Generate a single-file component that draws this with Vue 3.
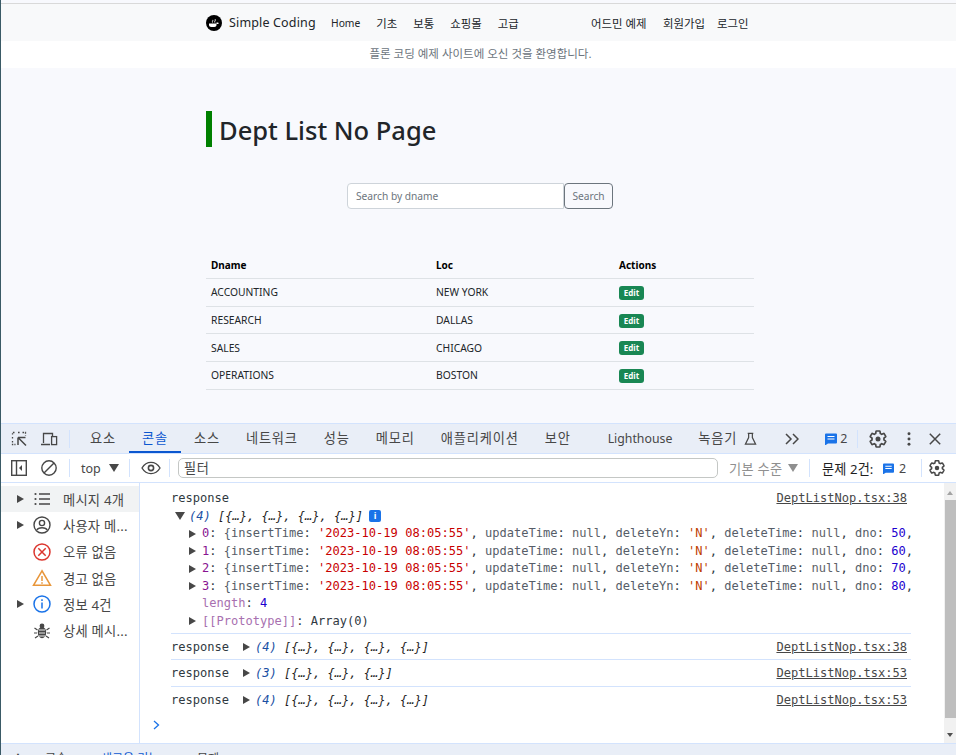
<script setup>
const navMain = ['Home', '기초', '보통', '쇼핑몰', '고급']
const depts = [
  { d: 'ACCOUNTING', l: 'NEW YORK' },
  { d: 'RESEARCH', l: 'DALLAS' },
  { d: 'SALES', l: 'CHICAGO' },
  { d: 'OPERATIONS', l: 'BOSTON' }
]
const tabs = ['요소', '콘솔', '소스', '네트워크', '성능', '메모리', '애플리케이션', '보안']
const rows = [50, 60, 70, 80]
const later = [
  { n: 4, t: '[{…}, {…}, {…}, {…}]', src: 'DeptListNop.tsx:38' },
  { n: 3, t: '[{…}, {…}, {…}]', src: 'DeptListNop.tsx:53' },
  { n: 4, t: '[{…}, {…}, {…}, {…}]', src: 'DeptListNop.tsx:53' }
]
const gear = 'M19.14 12.94c.04-.3.06-.61.06-.94 0-.32-.02-.64-.07-.94l2.03-1.58a.49.49 0 0 0 .12-.61l-1.92-3.32a.488.488 0 0 0-.59-.22l-2.39.96c-.5-.38-1.03-.7-1.62-.94l-.36-2.54a.484.484 0 0 0-.48-.41h-3.84c-.24 0-.43.17-.47.41l-.36 2.54c-.59.24-1.13.57-1.62.94l-2.39-.96c-.22-.08-.47 0-.59.22L2.74 8.87c-.12.21-.08.47.12.61l2.03 1.58c-.05.3-.09.63-.09.94s.02.64.07.94l-2.03 1.58a.49.49 0 0 0-.12.61l1.92 3.32c.12.22.37.29.59.22l2.39-.96c.5.38 1.03.7 1.62.94l.36 2.54c.05.24.24.41.48.41h3.84c.24 0 .44-.17.47-.41l.36-2.54c.59-.24 1.13-.56 1.62-.94l2.39.96c.22.08.47 0 .59-.22l1.92-3.32c.12-.22.07-.47-.12-.61l-2.01-1.58z'
</script>

<template>
  <div class="root">
    <section class="page">
      <nav class="nav">
        <svg class="logo" viewBox="0 0 16 16">
          <circle cx="8" cy="8" r="8" fill="#000" />
          <path d="M3 8.500h7.500v1.600c0 1.200-1 2-2.200 2H5.200C4 12.100 3 11.300 3 10.100z" fill="#fff" />
          <path d="M10.500 9h1.600c.7 0 .7-1.400-.2-1.400h-1.400z" fill="#fff" />
          <path d="M6.500 7.500c-.6-1 .7-1.400.2-2.600M8.800 7.500c-.6-1.200 1-1.800.4-3.300" stroke="#fff" stroke-width=".9" fill="none" />
        </svg>
        <span class="brand">Simple Coding</span>
        <div class="nav-main"><span v-for="n in navMain" :key="n" :class="{ home: n === 'Home' }">{{ n }}</span></div>
        <div class="nav-right">
          <span class="r1">어드민 예제</span><span class="r2">회원가입</span><span>로그인</span>
        </div>
      </nav>
      <div class="welcome">플론 코딩 예제 사이트에 오신 것을 환영합니다.</div>
      <main class="content">
        <h1 class="title">Dept List No Page</h1>
        <div class="search">
          <div class="search-input">Search by dname</div>
          <div class="search-btn">Search</div>
        </div>
        <table class="table">
          <thead>
            <tr><th class="c1">Dname</th><th class="c2">Loc</th><th>Actions</th></tr>
          </thead>
          <tbody>
            <tr v-for="r in depts" :key="r.d">
              <td>{{ r.d }}</td>
              <td>{{ r.l }}</td>
              <td><span class="badge">Edit</span></td>
            </tr>
          </tbody>
        </table>
      </main>
    </section>

    <section class="devtools">
      <div class="tabbar">
        <svg class="ic first" viewBox="0 0 16 16" width="16" height="16" fill="none" stroke="#474747">
          <path d="M3.500 1.500h-2v2M1.500 6v1.500M1.500 10v3.500h3M7 1.500h2M11.500 1.500h3v3" stroke-width="1.300" stroke-dasharray="1.600 1.100" />
          <path d="M7 6.500h7.500M7 6.500V14M7.500 7l7.500 7.500" stroke-width="1.500" />
        </svg>
        <svg class="ic device" viewBox="0 0 18 16" width="18" height="16" fill="none" stroke="#474747" stroke-width="1.300">
          <path d="M3.500 12V2.500h9V5M1 13.500h9" />
          <rect x="11.600" y="5.600" width="5" height="8" />
        </svg>
        <i class="vsep s1"></i>
        <div class="tabs">
          <span v-for="t in tabs" :key="t" class="tab" :class="{ active: t === '콘솔' }">{{ t }}</span>
        </div>
        <span class="tab lh">Lighthouse</span>
        <span class="tab rec">녹음기</span>
        <svg class="flask" viewBox="0 0 14 14" width="13" height="14" fill="none" stroke="#474747" stroke-width="1.300"><path d="M4 1h6M5 1v4.500L1.500 12.500h11L9 5.500V1" /></svg>
        <svg class="more" viewBox="0 0 14 12" width="14" height="12" fill="none" stroke="#474747" stroke-width="1.500"><path d="M1 1l5 5-5 5M8 1l5 5-5 5" /></svg>
        <svg class="chat" viewBox="0 0 12 12" width="12" height="12"><path d="M0 1.500Q0 .5 1 .5h10q1 0 1 1v8q0 1-1 1H3L0 12.500z" fill="#1a73e8" /><path d="M2.500 3.500h7M2.500 6h7" stroke="#fff" stroke-width="1.100" /></svg>
        <span class="cnt">2</span>
        <i class="vsep s2"></i>
        <svg class="gear g1" viewBox="0 0 24 24" width="20" height="20"><path :d="gear" fill="none" stroke="#474747" stroke-width="2" /><circle cx="12" cy="12" r="3" fill="#474747" /></svg>
        <svg class="dots" viewBox="0 0 4 16" width="4" height="14" fill="#474747"><circle cx="2" cy="2" r="1.700" /><circle cx="2" cy="8" r="1.700" /><circle cx="2" cy="14" r="1.700" /></svg>
        <svg class="close" viewBox="0 0 12 12" width="12" height="12" stroke="#474747" stroke-width="1.500"><path d="M.8.8l10.400 10.400M11.200.8L.8 11.200" /></svg>
      </div>

      <div class="toolbar">
        <svg class="t-panel" viewBox="0 0 16 16" width="16" height="16" fill="none" stroke="#474747" stroke-width="1.400"><rect x=".7" y=".7" width="14.600" height="14.600" /><path d="M5.500 1v14" /><path d="M11 5v6L8 8z" fill="#474747" stroke="none" /></svg>
        <svg class="t-block" viewBox="0 0 16 16" width="16" height="16" fill="none" stroke="#474747" stroke-width="1.400"><circle cx="8" cy="8" r="7.200" /><path d="M3 13L13 3" /></svg>
        <i class="vsep s3"></i>
        <span class="top">top</span>
        <i class="tri-d dk t-arrow"></i>
        <i class="vsep s4"></i>
        <svg class="eye" viewBox="0 0 20 14" width="20" height="14" fill="none" stroke="#474747" stroke-width="1.400"><path d="M1 7c4.500-7.500 13.500-7.500 18 0-4.500 7.500-13.500 7.500-18 0z" /><circle cx="10" cy="7" r="2.600" stroke-width="1.600" /></svg>
        <i class="vsep s5"></i>
        <div class="filter">필터</div>
        <span class="level">기본 수준</span>
        <i class="tri-d gr l-arrow"></i>
        <i class="vsep s6"></i>
        <span class="issues">문제 2건:</span>
        <svg class="chat2" viewBox="0 0 12 12" width="11" height="11"><path d="M0 1.500Q0 .5 1 .5h10q1 0 1 1v8q0 1-1 1H3L0 12.500z" fill="#1a73e8" /><path d="M2.500 3.500h7M2.500 6h7" stroke="#fff" stroke-width="1.100" /></svg>
        <span class="cnt2">2</span>
        <i class="vsep s7"></i>
        <svg class="gear g2" viewBox="0 0 24 24" width="18" height="18"><path :d="gear" fill="none" stroke="#474747" stroke-width="2" /><circle cx="12" cy="12" r="3" fill="#474747" /></svg>
      </div>

      <div class="body">
        <aside class="side">
          <div class="srow on">
            <i class="tri-r sa"></i>
            <svg class="si" viewBox="0 0 18 18" width="18" height="18" fill="#474747"><path d="M6 3.200h11v1.600H6zM6 8.200h11v1.600H6zM6 13.200h11v1.600H6z" /><circle cx="2.500" cy="4" r="1.100" /><circle cx="2.500" cy="9" r="1.100" /><circle cx="2.500" cy="14" r="1.100" /></svg>
            <span>메시지 4개</span>
          </div>
          <div class="srow">
            <i class="tri-r sa"></i>
            <svg class="si" viewBox="0 0 18 18" width="18" height="18" fill="none" stroke="#474747" stroke-width="1.400"><circle cx="9" cy="9" r="8" /><circle cx="9" cy="7" r="2.600" /><path d="M3.800 14c1.500-3 9-3 10.400 0" /></svg>
            <span>사용자 메...</span>
          </div>
          <div class="srow">
            <svg class="si np" viewBox="0 0 18 18" width="18" height="18" fill="none" stroke="#dc362e" stroke-width="1.500"><circle cx="9" cy="9" r="8" /><path d="M5.300 5.300l7.400 7.400M12.700 5.300l-7.400 7.400" /></svg>
            <span>오류 없음</span>
          </div>
          <div class="srow">
            <svg class="si np warn" viewBox="0 0 20 18" width="20" height="18" fill="none" stroke="#e8963a" stroke-width="1.500"><path d="M10 1.800L1.500 16.300h17z" /><path d="M10 7v5M10 13.200v1.500" /></svg>
            <span>경고 없음</span>
          </div>
          <div class="srow">
            <i class="tri-r sa"></i>
            <svg class="si" viewBox="0 0 18 18" width="18" height="18" fill="none" stroke="#1a73e8" stroke-width="1.500"><circle cx="9" cy="9" r="8" /><path d="M9 7.500v6M9 4.300v1.700" /></svg>
            <span>정보 4건</span>
          </div>
          <div class="srow">
            <svg class="si np" viewBox="0 0 18 18" width="18" height="18" fill="#474747"><ellipse cx="9" cy="10.500" rx="4.200" ry="5.800" /><circle cx="9" cy="4" r="2.400" /><path d="M1.500 6l3 2M16.500 6l-3 2M1 11h3M17 11h-3M2 16l3-2M16 16l-3-2" stroke="#474747" stroke-width="1.200" /><path d="M6 8h6M6 11h6M6 14h6" stroke="#fff" stroke-width=".9" /></svg>
            <span>상세 메시...</span>
          </div>
        </aside>

        <div class="console">
          <div class="msg first-msg">
            <div class="line split"><span>response</span><a class="src">DeptListNop.tsx:38</a></div>
            <div class="line arr"><i class="tri-d dk ca"></i><em class="sum"><span class="num">(4)</span> [{…}, {…}, {…}, {…}]</em><b class="info">i</b></div>
            <div v-for="(r, i) in rows" :key="r" class="line ent">
              <i class="tri-r ea"></i><span class="k">{{ i }}</span>: <span class="g">{</span><span class="p">insertTime</span>: <span class="s">'2023-10-19 08:05:55'</span>, <span class="p">updateTime</span>: <span class="n">null</span>, <span class="p">deleteYn</span>: <span class="y">'N'</span>, <span class="p">deleteTime</span>: <span class="n">null</span>, <span class="p">dno</span>: <span class="v">{{ r }}</span>,
            </div>
            <div class="line plain"><span class="l">length</span>: <span class="v">4</span></div>
            <div class="line ent"><i class="tri-r ea"></i><span class="l">[[Prototype]]</span>: <span>Array(0)</span></div>
          </div>
          <div v-for="(m, i) in later" :key="i" class="msg later" :class="{ last: i === 2 }">
            <div class="line split">
              <span>response<i class="tri-r la"></i><em class="sum"><span class="num">({{ m.n }})</span> {{ m.t }}</em></span>
              <a class="src">{{ m.src }}</a>
            </div>
          </div>
          <svg class="prompt" viewBox="0 0 7 10" width="7" height="10" fill="none" stroke="#1a73e8" stroke-width="1.300"><path d="M1 1l4.500 4L1 9" /></svg>
          <div class="scroll">
            <i class="sb-up"></i>
            <i class="sb-thumb"></i>
            <i class="sb-down"></i>
          </div>
        </div>
      </div>

      <div class="drawer">
        <span class="d1">⋮</span><span class="d2">콘솔</span><span class="d3">새로운 기능</span><span class="d4">문제</span>
      </div>
    </section>
  </div>
</template>

<style>
html, body { margin: 0; background: #fff; }
</style>

<style scoped>
.root {
  width: 955px; height: 755px; overflow: hidden; display: flex; flex-direction: column;
  border-left: 1px solid #3a5a66;
  font-family: "Noto Sans", "Noto Sans CJK KR", sans-serif; color: #212529;
}
.page { height: 423px; background: #f8f9fd; display: flex; flex-direction: column; flex: none; }
.nav {
  margin-top: 3px; height: 37px; background: #f8f9fa; border-top: 1px solid #d9d9d9;
  display: flex; align-items: center; padding-left: 205px; font-size: 11.400px; flex: none;
}
.logo { width: 16px; height: 16px; flex: none; }
.brand { margin-left: 7px; font-size: 12.500px; letter-spacing: .15px; width: 86px; white-space: nowrap; }
.nav-main { display: flex; align-items: center; gap: 16px; margin-left: 16px; width: 260px; }
.home { font-size: 10.300px; }
.nav-right { display: flex; }
.r1 { width: 72px; white-space: nowrap; }
.r2 { width: 54px; white-space: nowrap; }
.welcome {
  height: 27px; background: #fff; text-align: center; font-size: 11.500px; line-height: 26px;
  color: #6c757d; padding-left: 4px; flex: none;
}
.content { flex: 1; padding-left: 205px; }
.title {
  margin: 43px 0 0; height: 36px; border-left: 6px solid #008000; padding-left: 7px;
  font-size: 25.500px; font-weight: 500; line-height: 38px; color: #212529; white-space: nowrap;
}
.search { display: flex; margin: 36px 0 0 141px; height: 26px; font-size: 10.200px; line-height: 24px; }
.search-input {
  width: 207px; background: #fff; border: 1px solid #ced4da; border-radius: 4px 0 0 4px;
  padding-left: 8px; color: #6c757d;
}
.search-btn {
  width: 47px; text-align: center; border: 1px solid #6c757d; border-radius: 4px; color: #6c757d;
}
.table { width: 548px; margin-top: 43px; border-collapse: collapse; table-layout: fixed; font-size: 10.300px; }
.table th, .table td { padding: 0 5px; text-align: left; border-bottom: 1px solid #dee2e6; white-space: nowrap; }
.table th { font-weight: 700; height: 26px; color: #000; font-size: 10px; }
.table td { height: 26.700px; }
.c1 { width: 215px; }
.c2 { width: 173px; }
.badge {
  display: inline-block; width: 25px; height: 14px; background: #198754; color: #fff; border-radius: 3px;
  font-size: 8px; font-weight: 700; line-height: 14px; text-align: center; vertical-align: middle;
}

.devtools { flex: 1; display: flex; flex-direction: column; min-height: 0; color: #474747; }
.tabbar {
  height: 29px; flex: none; background: #e9eef7; border-top: 1px solid #d3e3fd; border-bottom: 1px solid #d3e3fd;
  display: flex; align-items: center; font-size: 13.200px; position: relative;
}
.vsep { display: block; width: 1px; height: 18px; background: #d3e3fd; flex: none; }
.ic.first { margin-left: 10px; }
.ic.device { margin-left: 13px; }
.s1 { margin-left: 11px; }
.tabs { display: flex; height: 100%; margin-left: 7px; }
.tab { padding: 0 13px; line-height: 29px; letter-spacing: .85px; white-space: nowrap; height: 29px; box-sizing: border-box; }
.tab.active { color: #0b57d0; border-bottom: 2px solid #0b57d0; }
.lh { margin-left: 11px; letter-spacing: 0; font-size: 12.300px; }
.rec { padding-right: 0; }
.flask { margin-left: 7px; }
.more { margin-left: 28px; }
.chat { margin-left: 26px; }
.cnt { margin-left: 3px; font-size: 12.500px; width: 8px; }
.s2 { margin-left: 9px; }
.g1 { margin-left: 10px; }
.dots { margin-left: 19px; }
.close { margin-left: 18px; }

.toolbar {
  height: 28px; flex: none; background: #fff; border-bottom: 1px solid #d3e3fd;
  display: flex; align-items: center; font-size: 13.200px;
}
.t-panel { margin-left: 10px; }
.t-block { margin-left: 14px; }
.s3 { margin-left: 12px; }
.top { margin-left: 11px; width: 28px; font-size: 12.500px; }
.s4 { margin-left: 10px; }
.eye { margin-left: 11px; }
.s5 { margin-left: 8px; }
.filter {
  margin-left: 8px; width: 533px; height: 18px; border: 1px solid #c4c7c5; border-radius: 5px;
  padding-left: 5px; line-height: 18px; flex: none; letter-spacing: .5px;
}
.level { margin-left: 11px; color: #8f8f8f; width: 59px; white-space: nowrap; letter-spacing: .3px; }
.s6 { margin-left: 11px; }
.issues { margin-left: 12px; width: 61px; white-space: nowrap; color: #1f1f1f; letter-spacing: .1px; }
.cnt2 { margin-left: 5px; width: 8px; font-size: 12.500px; }
.s7 { margin-left: 14px; }
.g2 { margin-left: 6px; }

.tri-d { display: inline-block; width: 0; height: 0; border-left: 5px solid transparent; border-right: 5px solid transparent; border-top: 8px solid #474747; flex: none; }
.tri-d.gr { border-top-color: #8f8f8f; }
.tri-r { display: inline-block; width: 0; height: 0; border-top: 4.500px solid transparent; border-bottom: 4.500px solid transparent; border-left: 7px solid #474747; flex: none; }

.body { flex: 1; min-height: 0; display: flex; background: #fff; }
.side { width: 138px; flex: none; border-right: 1px solid #d3e3fd; padding-top: 3px; font-size: 13.300px; }
.srow { height: 26.300px; display: flex; align-items: center; white-space: nowrap; letter-spacing: .2px; }
.srow.on { background: #f1f3f4; }
.sa { margin-left: 16px; }
.si { margin-left: 9px; margin-right: 12px; flex: none; }
.si.np { margin-left: 32px; }
.si.warn { margin-left: 31px; margin-right: 11px; }

.console { flex: 1; position: relative; font: 12.050px "DejaVu Sans Mono", monospace; color: #303942; min-width: 0; }
.msg { margin: 0 45px 0 31px; }
.first-msg { padding: 7px 0 3px; border-bottom: 1px solid #d3e3fd; }
.later { padding-top: 5px; height: 20.300px; border-bottom: 1px solid #d3e3fd; }
.later.last { border-bottom: 0; }
.line { height: 17.500px; line-height: 17.500px; white-space: nowrap; }
.split { display: flex; justify-content: space-between; padding-right: 4px; }
.src { color: #474747; text-decoration: underline; }
.arr { display: flex; align-items: center; padding-left: 4px; }
.ca { margin-right: 4px; }
.sum { font-style: italic; color: #1f1f1f; }
.num { color: #1a4fa3; }
.info {
  display: inline-block; width: 12px; height: 12px; margin-left: 6px; border-radius: 2px; background: #1a73e8; color: #fff;
  font: 700 9px/12px "Noto Sans", sans-serif; text-align: center;
}
.ent { padding-left: 18px; }
.ea { margin-right: 6px; vertical-align: -.5px; }
.plain { padding-left: 31px; }
.k { color: #881391; }
.g, .p { color: #565d68; }
.s { color: #c80000; }
.y { color: #c04000; }
.n { color: #5f6368; }
.v { color: #1c00cf; }
.l { color: #a870b0; }
.la { margin: 0 5px 0 14px; vertical-align: 0; }
.prompt { position: absolute; left: 13px; top: 237px; }
.scroll { position: absolute; right: 0; top: 0; bottom: 0; width: 12px; background: #f1f1f1; }
.sb-up { position: absolute; left: 3px; top: 8px; border-left: 3.500px solid transparent; border-right: 3.500px solid transparent; border-bottom: 4px solid #a3a3a3; }
.sb-thumb { position: absolute; left: 1px; right: 0; top: 17px; height: 218px; background: #bebebe; }
.sb-down { position: absolute; left: 3px; bottom: 6px; border-left: 3.500px solid transparent; border-right: 3.500px solid transparent; border-top: 4px solid #505050; }

.drawer {
  height: 12px; flex: none; background: #e9eef7; border-top: 1px solid #d3e3fd; overflow: hidden;
  display: flex; font-size: 12px; line-height: 30px; box-sizing: border-box; white-space: nowrap;
}
.d1 { margin-left: 11px; color: #474747; font-weight: 700; width: 33px; }
.d2 { width: 56px; color: #474747; }
.d3 { width: 96px; color: #0b57d0; }
.d4 { color: #474747; }
</style>
